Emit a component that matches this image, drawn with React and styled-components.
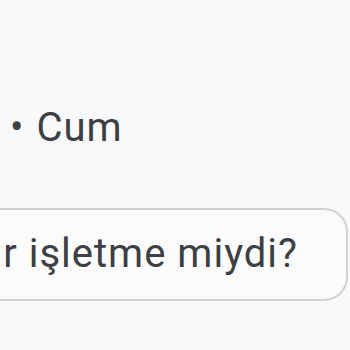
import React from "react";
import styled, { createGlobalStyle } from "styled-components";

const GlobalStyle = createGlobalStyle`
  html, body {
    margin: 0;
    padding: 0;
    background: #f8f9fa;
  }
  body {
    font-family: Roboto, "Liberation Sans", Arial, sans-serif;
    color: #3c4043;
    overflow: hidden;
  }
`;

const Page = styled.div`
  width: 350px;
  height: 350px;
  overflow: hidden;
  padding-top: 104px;
  box-sizing: border-box;
  display: flex;
  flex-direction: column;
  gap: 56px;
`;

const Hours = styled.div`
  font-size: 40px;
  line-height: 48px;
  letter-spacing: 1px;
  padding-left: 10px;
  white-space: nowrap;
`;

const Dot = styled.span`
  margin-right: 12px;
`;

const ChipRow = styled.div`
  display: flex;
  justify-content: flex-end;
  padding-right: 2px;
`;

const Chip = styled.button`
  flex: none;
  font-family: inherit;
  font-size: 40px;
  line-height: 48px;
  letter-spacing: 1px;
  color: #3c4043;
  background: #fbfbfc;
  border: 2px solid #cfd1d4;
  border-radius: 24px;
  padding: 20px 48px 21px 40px;
  white-space: nowrap;
`;

export default function App() {
  return (
    <>
      <GlobalStyle />
      <Page>
        <Hours>
          <Dot>•</Dot>Cum
        </Hours>
        <ChipRow>
          <Chip>Bu bir işletme miydi?</Chip>
        </ChipRow>
      </Page>
    </>
  );
}
